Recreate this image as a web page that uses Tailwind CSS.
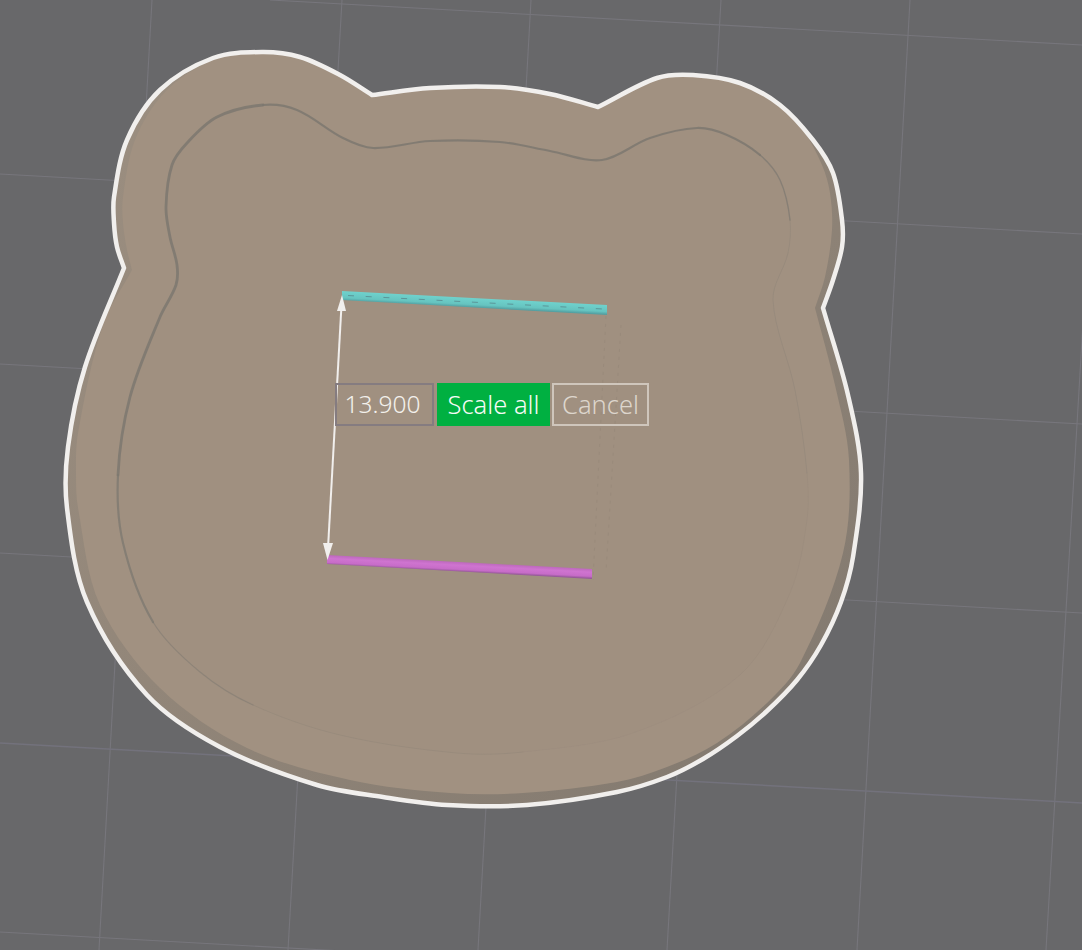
<!DOCTYPE html>
<html lang="en">
  <head>
    <meta charset="UTF-8" />
    <title>Scale</title>
    <script src="https://cdn.jsdelivr.net/npm/@tailwindcss/browser@4"></script>
  </head>
  <body class="bg-[#68686a] overflow-hidden">
    <div class="relative w-[1082px] h-[950px] overflow-hidden font-['Noto_Sans',sans-serif]">

      <!-- 3D viewport -->
      <svg class="absolute inset-0" width="1082" height="950" viewBox="0 0 1082 950" fill="none">
        <defs>
          <linearGradient id="rim" x1="100" y1="100" x2="800" y2="800" gradientUnits="userSpaceOnUse">
            <stop offset="0" stop-color="#9b8e80" />
            <stop offset="0.45" stop-color="#928679" />
            <stop offset="1" stop-color="#82796f" />
          </linearGradient>
          <linearGradient id="teal" x1="342" y1="291" x2="341.500" y2="300.500" gradientUnits="userSpaceOnUse">
            <stop offset="0" stop-color="#6fd2cd" />
            <stop offset="0.7" stop-color="#66c4c0" />
            <stop offset="1" stop-color="#539fa1" />
          </linearGradient>
          <linearGradient id="pink" x1="327" y1="555" x2="326.500" y2="564.500" gradientUnits="userSpaceOnUse">
            <stop offset="0" stop-color="#bd68bd" />
            <stop offset="0.35" stop-color="#cf74d0" />
            <stop offset="0.78" stop-color="#c76cc8" />
            <stop offset="1" stop-color="#965899" />
          </linearGradient>
        </defs>

        <!-- build plate grid -->
        <g stroke="#77767c" stroke-width="1.1">
          <line x1="152" y1="0" x2="99" y2="950" />
          <line x1="342" y1="0" x2="288" y2="950" />
          <line x1="531" y1="0" x2="478" y2="950" />
          <line x1="721" y1="0" x2="667" y2="950" />
          <line x1="910" y1="0" x2="857" y2="950" />
          <line x1="1102" y1="0" x2="1046" y2="950" />
          <line x1="270" y1="0" x2="1082" y2="45" />
          <line x1="0" y1="174" x2="1082" y2="234" />
          <line x1="0" y1="364" x2="1082" y2="424" />
          <line x1="0" y1="553" x2="1082" y2="613" />
          <line x1="0" y1="743" x2="1082" y2="803" stroke="#73727c" stroke-width="1.5" />
          <line x1="0" y1="932" x2="1082" y2="992" />
        </g>

        <!-- bear tray -->
        <path id="rimFill" fill="url(#rim)" />
        <path id="topFill" fill="#a19181" />
        <path id="innerFill" fill="#a09080" />
        <g id="groove" stroke="#7c7870" stroke-linecap="round"></g>
        <path id="outline" stroke="#f1efed" stroke-width="4.5" stroke-linejoin="round" />

        <!-- faint edges past the bars -->
        <g stroke="#8b7e70" stroke-width="1" stroke-dasharray="3 5" opacity="0.3">
          <line x1="606" y1="316" x2="593" y2="580" />
          <line x1="621" y1="325" x2="606" y2="572" />
        </g>

        <!-- selected edges -->
        <polygon points="342,291 607,305 607,315 342,300" fill="url(#teal)" />
        <g id="dashes" stroke="#5b9699" stroke-width="1"></g>
        <polygon points="327,555 592,569 592,579 327,564" fill="url(#pink)" />

        <!-- distance arrow -->
        <line x1="341.5" y1="305" x2="328" y2="548" stroke="#f1efed" stroke-width="2" />
        <polygon points="342,295 337,311 346,311" fill="#f1efed" />
        <polygon points="327.500,560 323,543 333,543" fill="#f1efed" />
      </svg>

      <!-- scale prompt -->
      <div class="absolute left-[335px] top-[383px] flex h-[43px] font-light leading-none">
        <div class="flex w-[99px] items-center justify-center border-2 border-[#857c80] pr-1 text-[24.5px] text-[#f3f0ec]">13.900</div>
        <button class="ml-[3px] flex w-[113px] items-center justify-center bg-[#00b041] text-[25.5px] text-[#f6fbf6]">Scale all</button>
        <button class="ml-[2px] flex w-[97px] items-center justify-center border-2 border-[#cfc6bc] text-[25.5px] text-[#ddd6cd]">Cancel</button>
      </div>
    </div>

    <script>
      const NS = "http://www.w3.org/2000/svg";
      const dist = (a, b) => Math.hypot(a[0] - b[0], a[1] - b[1]);

      // chord-scaled catmull-rom segment i -> i+1; `at` decides what lies past the ends
      function seg(at, i) {
        const [p0, p1, p2, p3] = [at(i - 1), at(i), at(i + 1), at(i + 2)];
        const d1 = dist(p0, p1), d2 = dist(p1, p2), d3 = dist(p2, p3);
        const k1 = d2 / (d1 + d2) / 3, k2 = d2 / (d2 + d3) / 3;
        const c1 = [p1[0] + (p2[0] - p0[0]) * k1, p1[1] + (p2[1] - p0[1]) * k1];
        const c2 = [p2[0] - (p3[0] - p1[0]) * k2, p2[1] - (p3[1] - p1[1]) * k2];
        return `C${c1[0]} ${c1[1]} ${c2[0]} ${c2[1]} ${p2[0]} ${p2[1]}`;
      }

      // runs of points that meet at sharp corners (the notches of the ears)
      function cornered(runs) {
        let d = `M${runs[0][0][0]} ${runs[0][0][1]}`;
        runs.forEach(pts => {
          const at = i => pts[Math.max(0, Math.min(pts.length - 1, i))];
          for (let i = 0; i < pts.length - 1; i++) d += seg(at, i);
        });
        return d + "Z";
      }

      const B = [[372,95],[430,88],[500,87],[550,94],[598,107]];

      const outer = cornered([
        [[124,268],[117,247],[114,223],[114,197],[127,140],[160,90],[213,58],[262,52],[300,57],[340,75],[372,95]],
        B,
        [[598,107],[657,78],[693,75],[740,83],[780,105],[813,140],[833,173],[842,220],[842,247],[833,280],[823,308]],
        [[823,308],[848,395],[861,473],[853,557],[841,602],[821,645],[797,680],[767,711],[737,736],[703,759],[667,777],[617,792],[527,805],[447,805],[383,797],[317,785],[220,747],[147,695],[87,602],[67,508],[68,447],[85,367],[124,268]]
      ]);

      const top_ = cornered([
        [[132,270],[127,250],[123,223],[123,197],[135,140],[165,92],[213,60],[262,53],[300,58],[340,76],[372,96]],
        B.map(([x, y]) => [x, y + 1]),
        [[598,108],[657,79],[693,76],[740,84],[780,106],[803,130],[822,165],[830,193],[832,230],[825,277],[815,308]],
        [[815,308],[835,385],[849,460],[843,553],[800,663],[767,703],[717,743],[667,767],[617,782],[523,793],[450,793],[350,780],[247,748],[160,688],[100,605],[78,508],[76,475],[78,433],[103,325],[132,270]]
      ]);

      const loop = [[118,475],[130,397],[160,317],[176,285],[177,265],[170,237],[166,207],[172,165],[187,143],[217,117],[263,105],[297,110],[343,138],[373,148],[430,141],[500,142],[550,151],[602,160],[650,138],[697,128],[727,135],[760,155],[780,180],[790,220],[788,253],[773,300],[795,390],[807,473],[807,520],[790,593],[740,675],[633,733],[523,752],[457,753],[340,735],[253,705],[200,672],[153,622],[123,543]];
      const atLoop = i => loop[(i + loop.length) % loop.length];

      function loopPath(from, to) {
        const start = atLoop(from);
        let d = `M${start[0]} ${start[1]}`;
        for (let i = from; i < to; i++) d += seg(atLoop, i);
        return d;
      }

      document.getElementById("rimFill").setAttribute("d", outer);
      document.getElementById("outline").setAttribute("d", outer);
      document.getElementById("topFill").setAttribute("d", top_);
      document.getElementById("innerFill").setAttribute("d", loopPath(0, loop.length) + "Z");

      // the groove fades out from the left ear round to the right side
      const grooves = [
        [0, 10, 2.8, 0.85], [10, 21, 2.2, 0.85], [21, 23, 1.4, 0.7],
        [23, 27, 0.8, 0.3], [27, 30, 0.7, 0.15], [30, 32, 0.6, 0.12],
        [32, 35, 0.8, 0.25], [35, 37, 1.2, 0.5], [37, 39, 2.2, 0.75]
      ];
      const groove = document.getElementById("groove");
      grooves.forEach(([from, to, width, opacity]) => {
        const p = document.createElementNS(NS, "path");
        p.setAttribute("d", loopPath(from, to));
        p.setAttribute("stroke-width", width);
        p.setAttribute("opacity", opacity);
        groove.appendChild(p);
      });

      // little tick marks along the teal edge
      const dashes = document.getElementById("dashes");
      for (let i = 0; i < 15; i++) {
        const x = 351 + i * 17.7;
        const y = 295.4 + (x - 348) * 0.0528;
        const l = document.createElementNS(NS, "line");
        l.setAttribute("x1", x - 3);
        l.setAttribute("y1", y);
        l.setAttribute("x2", x + 3);
        l.setAttribute("y2", y + 0.3);
        dashes.appendChild(l);
      }
    </script>
  </body>
</html>
